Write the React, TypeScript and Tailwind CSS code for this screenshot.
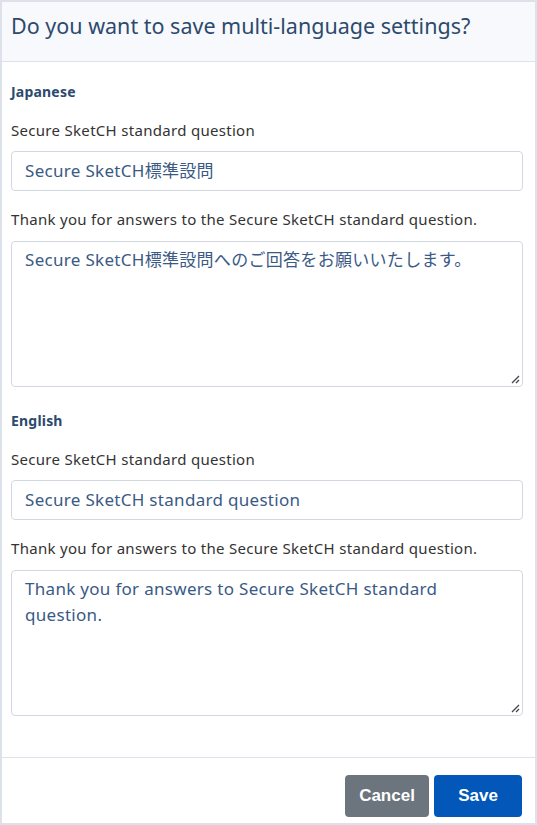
import React from "react";

const font = { fontFamily: '"Noto Sans", "Noto Sans CJK JP", sans-serif' };
const btnFont = { fontFamily: '"Liberation Sans", Arial, sans-serif' };

function Label({ children, mb }: { children: React.ReactNode; mb: string }) {
  return <div className={`text-[15px] leading-[20px] tracking-[0.3px] text-[#333333] ${mb}`}>{children}</div>;
}

function Field({ label, value }: { label: string; value: string }) {
  return (
    <div className="flex flex-col">
      <Label mb="mb-[11px]">{label}</Label>
      <div className="h-[40px] border border-[#d3d8e0] rounded-[4px] px-[13px] flex items-center text-[17px] tracking-[0.3px] text-[#3a5a85] bg-white">
        {value}
      </div>
    </div>
  );
}

function Area({ label, value }: { label: string; value: string }) {
  return (
    <div className="flex flex-col">
      <Label mb="mb-[12px]">{label}</Label>
      <div className="relative h-[146px] border border-[#d3d8e0] rounded-[4px] px-[13px] pt-[5px] text-[17px] leading-[26px] tracking-[0.3px] text-[#3a5a85] bg-white">
        {value}
        <svg className="absolute right-[2px] bottom-[2px]" width="10" height="10" viewBox="0 0 10 10">
          <path d="M9 2 L2 9 M9 6 L6 9" stroke="#444" strokeWidth="1.3" fill="none" />
        </svg>
      </div>
    </div>
  );
}

export default function App() {
  return (
    <div className="w-[537px] h-[825px] bg-white border-2 border-[#dde2ea] flex flex-col" style={font}>
      <div className="h-[60px] bg-[#f8f9fc] border-b border-[#dde2ea] px-[9px] pt-[10px] shrink-0">
        <div className="text-[21.5px] leading-[28px] text-[#2c4a6d]">Do you want to save multi-language settings?</div>
      </div>
      <div className="flex-1 flex flex-col pl-[9px] pr-[12px] pt-[20px]">
        <div className="text-[14px] font-bold text-[#2c4a6d] leading-[20px] tracking-[0.2px] mb-[18px]">Japanese</div>
        <div className="flex flex-col gap-[18px]">
          <Field label="Secure SketCH standard question" value="Secure SketCH標準設問" />
          <Area label="Thank you for answers to the Secure SketCH standard question." value="Secure SketCH標準設問へのご回答をお願いいたします。" />
        </div>
        <div className="text-[14px] font-bold text-[#2c4a6d] leading-[20px] tracking-[0.2px] mt-[24px] mb-[18px]">English</div>
        <div className="flex flex-col gap-[18px]">
          <Field label="Secure SketCH standard question" value="Secure SketCH standard question" />
          <Area label="Thank you for answers to the Secure SketCH standard question." value="Thank you for answers to Secure SketCH standard question." />
        </div>
      </div>
      <div className="h-[66px] border-t border-[#dde2ea] flex items-start justify-end gap-[5px] pl-[13px] pr-[13px] pt-[17px] shrink-0">
        <button className="h-[42px] w-[84px] rounded-[4px] bg-[#6c757d] text-white text-[17px] font-bold" style={btnFont}>Cancel</button>
        <button className="h-[42px] w-[88px] rounded-[4px] bg-[#0257b8] text-white text-[17px] font-bold" style={btnFont}>Save</button>
      </div>
    </div>
  );
}
